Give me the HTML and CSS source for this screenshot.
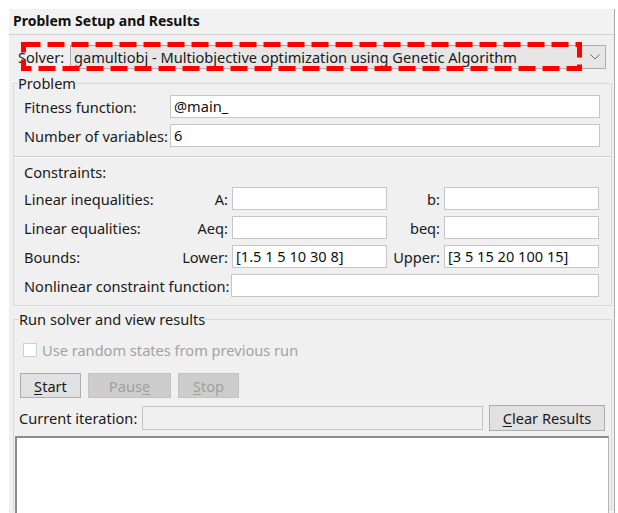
FILE: index.html
```html
<!DOCTYPE html>
<html lang="en">
<head>
<meta charset="utf-8">
<title>Optimization Tool</title>
<link rel="stylesheet" href="styles.css">
</head>
<body>
<div class="panel">
  <div class="panel-title">Problem Setup and Results</div>

  <div class="solver-row">
    <span class="solver-label">Solver:</span>
    <div class="combo">
      <span class="combo-text">gamultiobj - Multiobjective optimization using Genetic Algorithm</span>
      <svg class="combo-arrow" width="10" height="6" viewBox="0 0 10 6"><path d="M0.5 0.5 L5 5 L9.5 0.5" fill="none" stroke="#6d6d6d" stroke-width="1"/></svg>
    </div>
    <svg class="highlight" width="566" height="34" viewBox="0 0 566 34"><rect x="2.5" y="2.5" width="556" height="24" fill="none" stroke="#ff0000" stroke-width="5" stroke-dasharray="17 7"/></svg>
  </div>

  <fieldset class="group problem">
    <legend>Problem</legend>
    <div class="group-body problem-body">
      <div class="fields">
        <label class="field-label">Fitness function:</label>
        <div class="input">@main_</div>
        <label class="field-label">Number of variables:</label>
        <div class="input">6</div>
      </div>
    </div>
    <div class="separator"></div>
    <div class="group-body constraints-body">
      <div class="constraints-title">Constraints:</div>
      <div class="constraints">
        <span class="c-label">Linear inequalities:</span>
        <span class="c-key">A:</span>
        <div class="input"></div>
        <span class="c-key">b:</span>
        <div class="input"></div>

        <span class="c-label">Linear equalities:</span>
        <span class="c-key">Aeq:</span>
        <div class="input"></div>
        <span class="c-key">beq:</span>
        <div class="input"></div>

        <span class="c-label">Bounds:</span>
        <span class="c-key">Lower:</span>
        <div class="input">[1.5 1 5 10 30 8]</div>
        <span class="c-key">Upper:</span>
        <div class="input">[3 5 15 20 100 15]</div>

        <span class="c-label wide">Nonlinear constraint function:</span>
        <div class="input wide-input"></div>
      </div>
    </div>
  </fieldset>

  <fieldset class="group run">
    <legend>Run solver and view results</legend>
    <div class="check-row">
      <span class="checkbox"></span>
      <span class="check-text">Use random states from previous run</span>
    </div>
    <div class="button-row">
      <button class="btn btn-start"><u>S</u>tart</button>
      <button class="btn btn-disabled btn-pause" disabled>Paus<u>e</u></button>
      <button class="btn btn-disabled btn-stop" disabled><u>S</u>top</button>
    </div>
    <div class="iter-row">
      <span class="iter-label">Current iteration:</span>
      <div class="input iter-input"></div>
      <button class="btn btn-clear"><u>C</u>lear Results</button>
    </div>
    <div class="results"></div>
  </fieldset>
</div>
</body>
</html>
```

FILE: styles.css
```css
* {
  box-sizing: border-box;
}

html, body {
  margin: 0;
  padding: 0;
  background: #ffffff;
  overflow: hidden;
  height: 513px;
}

body {
  font-family: "Noto Sans", "Open Sans", sans-serif;
  font-size: 14.6px;
  color: #1a1a1a;
}

.panel {
  margin: 9px 0 0 9px;
  width: 606px;
  height: 504px;
  overflow: hidden;
  background: #f0f0f0;
  border-right: 1px solid #a9a9a9;
}

.panel-title {
  height: 26px;
  padding: 3px 0 0 4px;
  font-weight: 700;
  font-size: 14px;
  line-height: 18px;
  color: #111;
  background: #f2f2f2;
  border-bottom: 1px solid #d2d2d2;
}

/* solver selector */
.solver-row {
  position: relative;
  display: flex;
  align-items: center;
  margin: 10px 8px 0 9px;
  height: 24px;
}

.solver-label {
  width: 52px;
  line-height: 18px;
}

.combo {
  flex: 1;
  height: 24px;
  display: flex;
  align-items: center;
  background: #e6e6e6;
  border: 1px solid #adadad;
  padding: 0 3px 0 3px;
}

.combo-text {
  flex: 1;
  line-height: 18px;
  color: #1a1a1a;
}

.combo-arrow {
  margin-right: 2px;
}

.highlight {
  position: absolute;
  left: 3px;
  top: -3px;
  pointer-events: none;
}

/* group boxes */
.group {
  margin: 5px 2px 0 4px;
  padding: 0;
  border: 1px solid #d9d9d9;
  border-radius: 0;
  min-width: 0;
}

.group legend {
  margin-left: 4px;
  padding: 0;
  line-height: 18px;
  color: #1a1a1a;
}

.group-body {
  padding: 0 11px 0 10px;
}

.problem-body {
  padding-top: 3px;
}

.constraints-body {
  padding-bottom: 8px;
}

.fields {
  display: grid;
  grid-template-columns: 146px 1fr;
  row-gap: 6px;
  align-items: center;
}

.field-label {
  line-height: 18px;
}

.input {
  height: 23px;
  background: #ffffff;
  border: 1px solid #c6c6c6;
  padding: 0 3px;
  line-height: 20px;
  color: #111;
  white-space: nowrap;
  overflow: hidden;
}

.separator {
  height: 0;
  border-top: 1px solid #d0d0d0;
  border-bottom: 1px solid #fafafa;
  margin-top: 9px;
}

.constraints-title {
  margin-top: 5px;
  line-height: 18px;
}

.constraints {
  margin-top: 6px;
  display: grid;
  grid-template-columns: 146px 62px 155px 57px 155px;
  row-gap: 6px;
  align-items: center;
}

.c-label {
  line-height: 18px;
}

.c-key {
  text-align: right;
  padding-right: 4px;
  line-height: 18px;
}

.c-label.wide {
  grid-column: 1 / 3;
}

.wide-input {
  grid-column: 3 / 6;
  margin-left: -1px;
}

/* run section */
.run {
  margin-top: 4px;
  padding: 0 3px 0 1px;
  height: 200px;
}

.check-row {
  display: flex;
  align-items: center;
  margin: 13px 0 0 8px;
  height: 18px;
}

.checkbox {
  width: 14px;
  height: 14px;
  background: #ffffff;
  border: 1px solid #cfcfcf;
  margin-right: 5px;
}

.check-text {
  color: #a3a3a3;
  line-height: 18px;
}

.button-row {
  display: flex;
  gap: 7px;
  margin: 14px 0 0 5px;
}

.btn {
  font-family: inherit;
  font-size: 14.6px;
  height: 25px;
  line-height: 20px;
  padding: 0;
  margin: 0;
  border: 1px solid #adadad;
  background: #e1e1e1;
  color: #1a1a1a;
}

.btn u {
  text-underline-offset: 2px;
}

.btn-start {
  width: 61px;
}

.btn-pause {
  width: 83px;
}

.btn-stop {
  width: 61px;
}

.btn-disabled {
  background: #cdcdcd;
  border-color: #c3c3c3;
  color: #a0a0a0;
}

.iter-row {
  display: flex;
  align-items: center;
  margin: 7px 0 0 4px;
  height: 25px;
}

.iter-label {
  width: 123px;
  line-height: 18px;
  white-space: nowrap;
}

.iter-input {
  width: 341px;
  height: 24px;
  background: #f0f0f0;
  border-color: #c2c2c2;
}

.btn-clear {
  margin-left: 6px;
  width: 116px;
  height: 26px;
}

.results {
  margin: 6px 0 0 0;
  height: 120px;
  width: 594px;
  background: #ffffff;
  border: 1px solid #8c8c8c;
  border-left-width: 2px;
  border-top-width: 2px;
  border-right-color: #b5b5b5;
}
```
